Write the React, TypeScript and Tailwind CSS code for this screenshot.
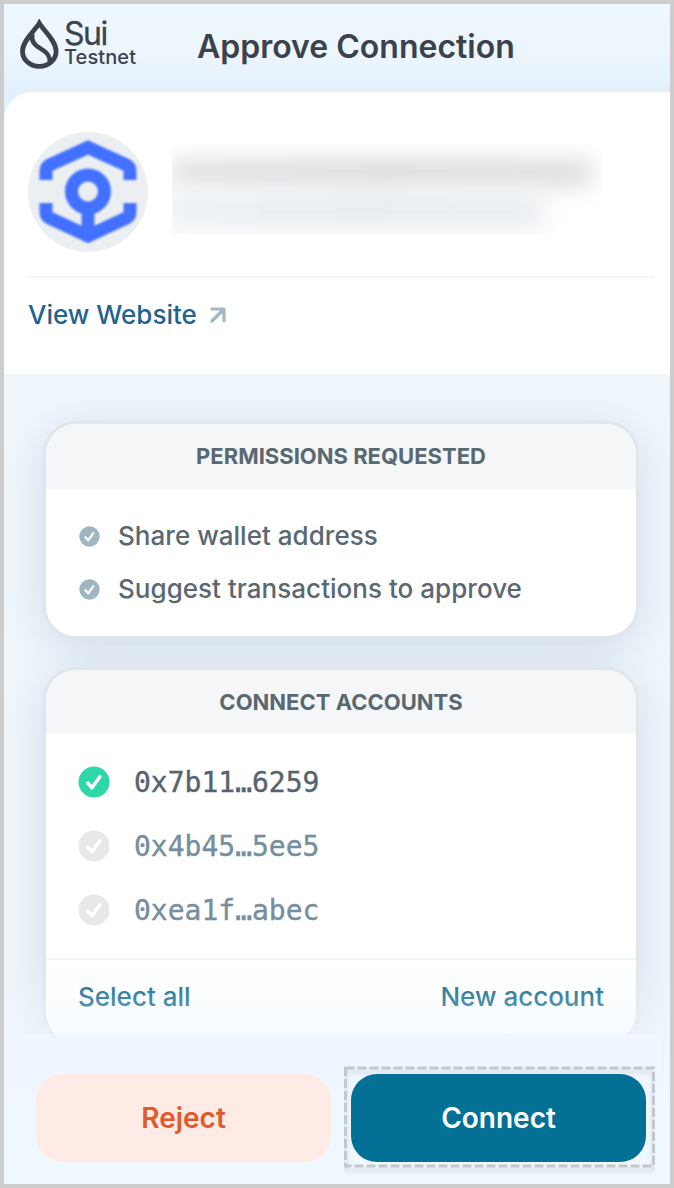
import type { ReactNode } from "react";

function SuiMark() {
  return (
    <svg width="40" height="52" viewBox="0 0 40 52" fill="none" stroke="#3b434d" className="shrink-0">
      <path d="M19.300 4.200C15.500 11 2.500 21.500 2.500 32C2.500 41 9.900 47.400 19.300 47.400C28.700 47.400 36.100 41 36.100 32C36.100 21.500 23.100 11 19.300 4.200Z" strokeWidth="4.8" strokeLinejoin="miter" />
      <path d="M12.500 15C10.300 22.500 15 26.500 20.500 29.500C27 33.200 30.600 37 29.800 44" strokeWidth="4.6" />
    </svg>
  );
}

function HexKeyLogo() {
  return (
    <svg width="120" height="120" viewBox="0 0 120 120" fill="none" stroke="#4271ff" className="shrink-0 rounded-full bg-[#eceff2]">
      <g className="blur-[1.3px]" strokeWidth="13">
        <path d="M18 48V39Q18 35 21.500 33L60 15.500L98.500 33Q102 35 102 39V48" />
        <path d="M18 71V80Q18 84 21.500 86L60 104L98.500 86Q102 84 102 80V71" />
        <circle cx="60" cy="59.500" r="16.500" />
        <path d="M60 76V103" />
      </g>
    </svg>
  );
}

function CheckCircle({ size, className }: { size: number; className: string }) {
  return (
    <svg width={size} height={size} viewBox="0 0 32 32" className={`shrink-0 ${className}`}>
      <circle cx="16" cy="16" r="15.500" fill="currentColor" />
      <path d="M9.800 17.200L14 21.800L21.800 10.800" fill="none" stroke="#fff" strokeWidth="3.500" strokeLinecap="round" strokeLinejoin="round" />
    </svg>
  );
}

function Card({ title, className, headClass, children }: { title: string; className: string; headClass: string; children: ReactNode }) {
  return (
    <section className={`shrink-0 overflow-hidden rounded-[33px] border-[3px] border-[#e1e6ea] bg-white bg-clip-padding shadow-[0_8px_44px_rgba(90,110,140,0.19)] ${className}`}>
      <h2 className={`flex items-center justify-center bg-[#f4f6f8] text-[22px] font-bold text-[#5a6872] ${headClass}`}>{title}</h2>
      {children}
    </section>
  );
}

const permissions = ["Share wallet address", "Suggest transactions to approve"];
const accounts = [
  { address: "0x7b11…6259", selected: true },
  { address: "0x4b45…5ee5", selected: false },
  { address: "0xea1f…abec", selected: false },
];

export default function App() {
  return (
    <div className="flex h-[1188px] w-[674px] flex-col overflow-hidden border-4 border-[#cdcdcd] bg-[#eff7fe] font-['Inter',sans-serif]">
      <div className="shrink-0 bg-linear-to-b from-[#f0f8ff] via-[#eef6fd] to-[#e2f0fb]">
        <header className="flex h-[88px] items-start">
          <div className="flex w-[193px] gap-1 pt-[15px] pl-4">
            <SuiMark />
            <div className="text-[#3b434d]">
              <div className="text-[32px] leading-[29px] tracking-[-1.5px] [-webkit-text-stroke:0.3px_currentColor]">Sui</div>
              <div className="pt-px text-[20px] leading-[17px] font-medium tracking-[0.1px]">Testnet</div>
            </div>
          </div>
          <h1 className="pt-[23px] text-[32px] leading-10 font-semibold text-[#3b424c]">Approve Connection</h1>
        </header>
      </div>
      <div className="shrink-0 bg-[#e2f0fb]">
        <div className="flex h-[282px] flex-col rounded-tl-[28px] bg-white pr-4 pl-6">
          <div className="flex h-[186px] gap-6 border-b-2 border-[#f4f5f6] pt-10">
            <HexKeyLogo />
            <div className="mt-3 h-[90px] w-[430px] overflow-hidden">
              <div className="mt-[15px] h-7 w-[420px] bg-linear-to-r from-[#e0e0e2] via-[#dadadc] to-[#dededf] blur-[11px]" />
              <div className="-ml-2 h-11 w-[382px] bg-linear-to-r from-[#eff2f5] via-[#eaedf0] to-[#edf0f3] blur-[11px]" />
            </div>
          </div>
          <a className="mt-[19px] flex items-center text-[26px] leading-9 font-medium text-[#1f6390]">
            View Website
            <svg width="16" height="16" viewBox="0 0 16 16" fill="none" stroke="#a3b6c1" strokeWidth="3.2" strokeLinecap="round" strokeLinejoin="round" className="ml-[13px]">
              <path d="M2 2H14V14M13.500 2.500L2 14" />
            </svg>
          </a>
        </div>
      </div>
      <main className="relative flex h-[660px] shrink-0 flex-col overflow-hidden bg-[#eff7fd] pt-[47px] pl-[39px]">
        <Card title="PERMISSIONS REQUESTED" className="w-[596px]" headClass="h-[65px]">
          <ul className="flex h-[147px] flex-col gap-[17px] pt-[29px] pl-[33px]">
            {permissions.map((text) => (
              <li key={text} className="flex items-center gap-[18px] text-[26px] leading-9 font-medium tracking-[0.03px] text-[#5a6872]">
                <CheckCircle size={21} className="text-[#a0b6c3]" />
                {text}
              </li>
            ))}
          </ul>
        </Card>
        <Card title="CONNECT ACCOUNTS" className="mt-7 w-[596px]" headClass="h-16">
          <ul className="flex h-[226px] flex-col border-b-2 border-[#f3f4f5] pt-4 pl-8">
            {accounts.map(({ address, selected }) => (
              <li key={address} className={`flex h-16 items-center gap-6 font-['DejaVu_Sans_Mono',monospace] text-[28px] ${selected ? "text-[#56646f]" : "text-[#768f9f]"}`}>
                <CheckCircle size={32} className={selected ? "text-[#2dd7a7]" : "text-[#e6e8ea]"} />
                <span className="pt-px [-webkit-text-stroke:0.4px_currentColor]">{address}</span>
              </li>
            ))}
          </ul>
          <div className="flex h-[82px] justify-between px-8 pt-[19px] text-[26px] leading-9 font-medium text-[#096689]">
            <span>Select all</span>
            <span>New account</span>
          </div>
        </Card>
        <div className="absolute inset-x-0 bottom-0 h-20 bg-linear-to-b from-[#f0f7ff]/0 via-[#f0f7ff]/20 to-[#f0f7ff]/55" />
      </main>
      <footer className="flex h-[150px] shrink-0 gap-5 bg-linear-to-b from-[#eff6ff] to-[#f0f8ff] pt-10 pl-8 text-[28px] font-semibold">
        <button className="h-[88px] w-[295px] rounded-[26px] bg-[#ffebe6] text-[#e05a2b]">Reject</button>
        <div className="relative h-[88px] w-[295px]">
          <svg width="311" height="110" viewBox="0 0 311 110" fill="none" className="absolute top-[-8px] left-[-7px]">
            <rect x="1.500" y="6" width="308" height="98" stroke="#8492a0" strokeOpacity="0.25" strokeWidth="3" className="blur-[2px]" />
            <rect x="1.500" y="2" width="308" height="98" stroke="#c4c8cb" strokeWidth="3" strokeDasharray="9 3" />
          </svg>
          <button className="relative h-full w-full rounded-[26px] bg-[#037196] text-white">Connect</button>
        </div>
      </footer>
    </div>
  );
}
